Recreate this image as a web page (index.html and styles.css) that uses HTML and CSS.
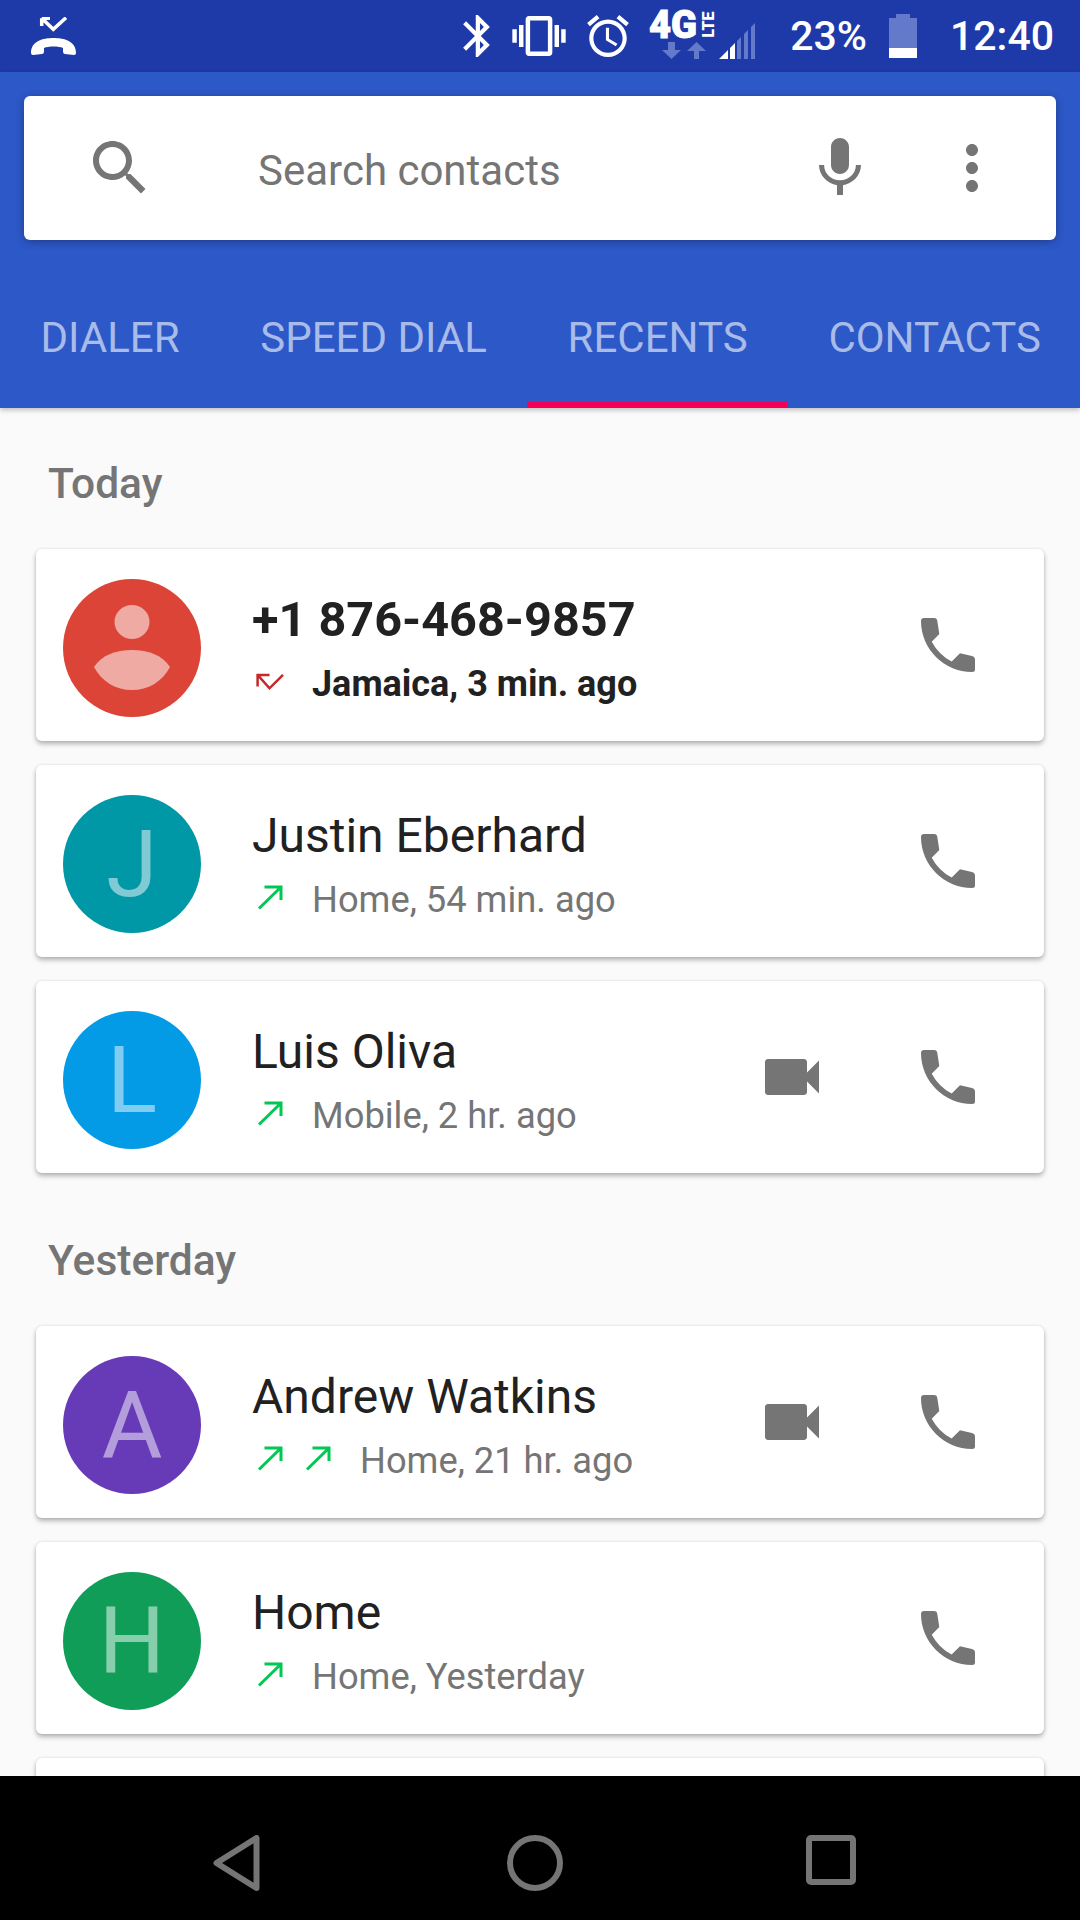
FILE: index.html
```html
<!DOCTYPE html>
<html lang="en">
<head>
<meta charset="utf-8">
<title>Recents</title>
<link rel="stylesheet" href="styles.css">
</head>
<body>
<div class="screen">
  <header class="status">
    <svg class="st-missed" viewBox="0 0 46 39"><path class="st-check" d="M10.7 1.2V9M10.7 1.2H19M10.7 1.2L22.3 12.3L35 .7"/><path class="white" d="M0 36C0 24 12 21 22.5 21C33 21 45 24 45 36Q45 38 43 38L34 37Q32 37 32 34V31C28 29 17 29 13 31V34Q13 37 11 37L2 38Q0 38 0 36Z"/></svg>
    <span class="spacer"></span>
    <svg class="st-bt" viewBox="5 2 12.71 20"><path class="white" d="M17.71 7.71L12 2h-1v7.59L6.41 5 5 6.41 10.59 12 5 17.59 6.41 19 11 14.41V22h1l5.71-5.71-4.3-4.29 4.3-4.29zM13 5.83l1.88 1.88L13 9.59V5.83zm1.88 10.46L13 18.17v-3.76l1.88 1.88z"/></svg>
    <svg class="st-vib" viewBox="0 3 24 18"><path class="white" d="M0 15h2V9H0v6zm3 2h2V7H3v10zm19-8v6h2V9h-2zm-3 8h2V7h-2v10zM16.5 3h-9C6.67 3 6 3.67 6 4.5v15c0 .83.67 1.5 1.5 1.5h9c.83 0 1.5-.67 1.5-1.5v-15c0-.83-.67-1.5-1.5-1.5zM16 19H8V5h8v14z"/></svg>
    <svg class="st-alarm" viewBox="2 1.86 20 20.14"><path class="white" d="M22 5.72l-4.6-3.86-1.29 1.53 4.6 3.86L22 5.72zM7.88 3.39L6.6 1.86 2 5.71l1.29 1.53 4.59-3.85zM12.5 8H11v6l4.75 2.85.75-1.23-4-2.37V8zM12 4c-4.97 0-9 4.03-9 9s4.02 9 9 9c4.97 0 9-4.03 9-9s-4.03-9-9-9zm0 16c-3.87 0-7-3.13-7-7s3.13-7 7-7 7 3.13 7 7-3.13 7-7 7z"/></svg>
    <svg class="st-net" viewBox="0 -10 106 72">
      <text class="net-4g" x="0" y="27.500" textLength="48" lengthAdjust="spacingAndGlyphs">4G</text>
      <text class="net-lte" transform="translate(65 27.500) rotate(-90)" x="0" y="0" textLength="26" lengthAdjust="spacingAndGlyphs">LTE</text>
      <path class="dim" d="M19 32h7v8h6l-9.500 9-9.500-9h6zM45 49v-8h-7l9.500-9 9.500 9h-7v8z"/>
      <path class="white" d="M70 49H79V40ZM81 49H86V33L81 38Z"/>
      <path class="dim" d="M88 49H92V27L88 31ZM95 49H99V20L95 24ZM102 49H106V13L102 17Z"/>
    </svg>
    <span class="st-pct">23%</span>
    <svg class="st-batt" viewBox="0 0 28 44"><path class="dim" d="M7 0H21V4H28V34H0V4H7Z"/><rect class="white" x="0" y="34" width="28" height="10"/></svg>
    <span class="st-time">12:40</span>
  </header>

  <div class="appbar">
    <div class="search">
      <svg class="ic72 ic-search" viewBox="0 0 24 24"><path d="M15.500 14h-.79l-.28-.27C15.410 12.590 16 11.110 16 9.500 16 5.910 13.090 3 9.500 3S3 5.910 3 9.500 5.910 16 9.500 16c1.610 0 3.090-.59 4.230-1.570l.27.28v.79l5 4.990L20.490 19l-4.990-5zm-6 0C7.010 14 5 11.990 5 9.500S7.010 5 9.500 5 14 7.010 14 9.500 11.990 14 9.500 14z"/></svg>
      <span class="search-text">Search contacts</span>
      <svg class="ic72 ic-mic" viewBox="0 0 24 24"><path d="M12 14c1.660 0 2.990-1.340 2.990-3L15 5c0-1.660-1.340-3-3-3S9 3.340 9 5v6c0 1.660 1.340 3 3 3zm5.300-3c0 3-2.540 5.100-5.300 5.100S6.700 14 6.700 11H5c0 3.410 2.720 6.230 6 6.720V21h2v-3.280c3.280-.48 6-3.300 6-6.720h-1.700z"/></svg>
      <svg class="ic72" viewBox="0 0 24 24"><path d="M12 8c1.100 0 2-.9 2-2s-.9-2-2-2-2 .9-2 2 .9 2 2 2zm0 2c-1.100 0-2 .9-2 2s.9 2 2 2 2-.9 2-2-.9-2-2-2zm0 6c-1.100 0-2 .9-2 2s.9 2 2 2 2-.9 2-2-.9-2-2-2z"/></svg>
    </div>
    <nav class="tabs">
      <span class="tab">DIALER</span>
      <span class="tab">SPEED DIAL</span>
      <span class="tab active">RECENTS</span>
      <span class="tab">CONTACTS</span>
    </nav>
  </div>

  <main class="list">
    <svg class="defs" width="0" height="0">
      <defs>
        <path id="phone" d="M9 12Q9 9 12 9H22Q25 9 25.300 12L27.300 25L19.700 32.700Q27 46 39.700 52.600L48 44.200L60 47Q63 48 63 50.500V60.500Q63 63 60 63C32 63 9 40 9 12Z"/>
        <path id="video" d="M17 10.500V7c0-.55-.45-1-1-1H4c-.55 0-1 .45-1 1v10c0 .55.45 1 1 1h12c.55 0 1-.45 1-1v-3.500l4 4v-11l-4 4z"/>
        <path id="out" d="M12.500 5H29V18M29 5L7 26.500"/>
      </defs>
    </svg>

    <h2 class="day">Today</h2>
    <article class="card">
      <div class="avatar red">
        <svg class="person" viewBox="0 0 76 85"><ellipse cx="38" cy="17" rx="17.500" ry="17"/><path d="M0 62C8 50 22 45 38 45C54 45 68 50 76 62C68 77 54 85 38 85C22 85 8 77 0 62Z"/></svg>
      </div>
      <div class="body">
        <div class="name strong">+1 876-468-9857</div>
        <div class="sub strong">
          <svg class="arrow missed" viewBox="0 0 36 36"><path d="M17.500 8.900H5.600V20.600M5.600 8.900L17.500 22.300L31 8.900"/></svg>
          <span class="sub-text">Jamaica, 3 min. ago</span>
        </div>
      </div>
      <svg class="ic72 call" viewBox="0 0 72 72"><use href="#phone"/></svg>
    </article>

    <article class="card">
      <div class="avatar teal"><span class="letter">J</span></div>
      <div class="body">
        <div class="name">Justin Eberhard</div>
        <div class="sub">
          <svg class="arrow" viewBox="0 0 36 36"><use href="#out"/></svg>
          <span class="sub-text">Home, 54 min. ago</span>
        </div>
      </div>
      <svg class="ic72 call" viewBox="0 0 72 72"><use href="#phone"/></svg>
    </article>

    <article class="card">
      <div class="avatar blue"><span class="letter">L</span></div>
      <div class="body">
        <div class="name">Luis Oliva</div>
        <div class="sub">
          <svg class="arrow" viewBox="0 0 36 36"><use href="#out"/></svg>
          <span class="sub-text">Mobile, 2 hr. ago</span>
        </div>
      </div>
      <svg class="ic72 video" viewBox="0 0 24 24"><use href="#video"/></svg>
      <svg class="ic72 call" viewBox="0 0 72 72"><use href="#phone"/></svg>
    </article>

    <h2 class="day later">Yesterday</h2>
    <article class="card">
      <div class="avatar purple"><span class="letter">A</span></div>
      <div class="body">
        <div class="name">Andrew Watkins</div>
        <div class="sub">
          <svg class="arrow" viewBox="0 0 36 36"><use href="#out"/></svg>
          <svg class="arrow" viewBox="0 0 36 36"><use href="#out"/></svg>
          <span class="sub-text">Home, 21 hr. ago</span>
        </div>
      </div>
      <svg class="ic72 video" viewBox="0 0 24 24"><use href="#video"/></svg>
      <svg class="ic72 call" viewBox="0 0 72 72"><use href="#phone"/></svg>
    </article>

    <article class="card">
      <div class="avatar green"><span class="letter">H</span></div>
      <div class="body">
        <div class="name">Home</div>
        <div class="sub">
          <svg class="arrow" viewBox="0 0 36 36"><use href="#out"/></svg>
          <span class="sub-text">Home, Yesterday</span>
        </div>
      </div>
      <svg class="ic72 call" viewBox="0 0 72 72"><use href="#phone"/></svg>
    </article>

    <article class="card"></article>
  </main>

  <footer class="navbar">
    <svg class="nav-back" viewBox="0 0 47 56"><path d="M43.500 3V53L3.500 28Z"/></svg>
    <svg class="nav-home" viewBox="0 0 56 56"><circle cx="28" cy="28" r="25"/></svg>
    <svg class="nav-recent" viewBox="0 0 50 50"><rect x="3" y="3" width="44" height="44" rx="2"/></svg>
  </footer>
</div>
</body>
</html>
```
FILE: styles.css
```css
* { box-sizing: border-box; }
html, body { margin: 0; padding: 0; }
body { font-family: Roboto, "Liberation Sans", sans-serif; background: #fafafa; }

.screen {
  width: 1080px;
  height: 1920px;
  display: flex;
  flex-direction: column;
  overflow: hidden;
  background: #fafafa;
}

.white { fill: #fff; }
.dim { fill: #6379c9; }

/* status bar */
.status {
  flex: none;
  height: 72px;
  background: #1e3aa8;
  display: flex;
  align-items: center;
  padding: 0 26px 0 31px;
  color: #fff;
}
.spacer { flex: 1; }
.st-missed { width: 46px; height: 39px; }
.st-check { fill: none; stroke: #fff; stroke-width: 3.5; }
.st-bt { width: 27px; height: 42px; }
.st-vib { width: 54px; height: 40px; margin-left: 22px; }
.st-alarm { width: 42px; height: 42px; margin-left: 21px; }
.st-net { width: 106px; height: 72px; margin-left: 20px; }
.net-4g { font-family: Roboto, sans-serif; font-weight: 900; font-size: 39px; fill: #fff; stroke: #fff; stroke-width: 1; }
.net-lte { font-family: Roboto, sans-serif; font-weight: 900; font-size: 16px; fill: #fff; }
.st-pct { font-size: 41px; font-weight: 500; margin-left: 35px; line-height: 48px; }
.st-batt { width: 28px; height: 44px; margin-left: 22px; }
.st-time { font-size: 41px; font-weight: 500; margin-left: 33px; line-height: 48px; }

/* app bar */
.appbar {
  flex: none;
  height: 336px;
  background: #2c58c8;
  padding-top: 24px;
  position: relative;
  z-index: 1;
  box-shadow: 0 2px 5px rgba(0, 0, 0, .25);
  display: flex;
  flex-direction: column;
}
.search {
  margin: 0 24px;
  height: 144px;
  background: #fff;
  border-radius: 6px;
  box-shadow: 0 2px 8px rgba(0, 0, 0, .3);
  display: flex;
  align-items: center;
  padding: 0 48px 0 60px;
  gap: 60px;
}
.ic72 { flex: none; width: 72px; height: 72px; fill: #757575; }
.search-text { flex: 1; margin-left: 42px; padding-top: 5px; font-size: 42px; color: #757575; line-height: 48px; }
.tabs { display: flex; height: 168px; }
.tab {
  flex: none;
  padding: 74px 40.400px 0;
  font-size: 42px;
  line-height: 48px;
  white-space: nowrap;
  color: rgba(255, 255, 255, .6);
  border-bottom: 6px solid transparent;
}
.tab.active { border-bottom-color: #f50057; }

/* list */
.list { flex: 1; min-height: 0; overflow: hidden; }
.defs { position: absolute; }
.day {
  margin: 0;
  padding: 52px 0 41px 48px;
  font-size: 42.500px;
  line-height: 48px;
  font-weight: 500;
  color: #757575;
}
.day.later { padding-top: 40px; }

.card {
  margin: 0 36px 24px;
  height: 192px;
  background: #fff;
  border-radius: 6px;
  box-shadow: 0 3px 5px rgba(0, 0, 0, .28), 0 0 3px rgba(0, 0, 0, .1);
  display: flex;
  align-items: center;
  padding: 0 60px 0 27px;
}
.avatar {
  flex: none;
  width: 138px;
  height: 138px;
  margin-top: 5px;
  border-radius: 50%;
  display: flex;
  align-items: center;
  justify-content: center;
}
.red { background: #db4437; }
.teal { background: #0097a7; }
.blue { background: #039be5; }
.purple { background: #673ab7; }
.green { background: #0f9d58; }
.letter { font-size: 93px; font-weight: 400; line-height: 100px; padding-top: 2px; color: rgba(255, 255, 255, .5); }
.person { width: 76px; height: 85px; fill: rgba(255, 255, 255, .55); }

.body { flex: 1; min-width: 0; margin-left: 51px; padding-top: 8px; }
.name { font-size: 48px; line-height: 60px; color: #212121; }
.sub { margin-top: 10px; display: flex; align-items: center; height: 48px; }
.sub-text { margin-left: 12px; font-size: 36.300px; line-height: 48px; color: #757575; }
.name.strong { font-weight: 700; font-size: 48.600px; }
.sub.strong .sub-text { font-weight: 700; font-size: 36px; color: #212121; }
.arrow { flex: none; width: 36px; height: 36px; margin-right: 12px; fill: none; stroke: #00c853; stroke-width: 3; }
.arrow.missed { stroke: #c62828; stroke-width: 2.500; }
.video { margin-right: 84px; }

/* nav bar */
.navbar {
  flex: none;
  height: 144px;
  background: #000;
  display: flex;
  align-items: flex-start;
  padding: 59px 0 0 213px;
}
.navbar svg { flex: none; fill: none; stroke: #757575; stroke-width: 6; stroke-linejoin: round; }
.nav-back { width: 47px; height: 56px; }
.nav-home { width: 56px; height: 56px; margin-left: 247px; }
.nav-recent { width: 50px; height: 50px; margin-left: 243px; }
```
